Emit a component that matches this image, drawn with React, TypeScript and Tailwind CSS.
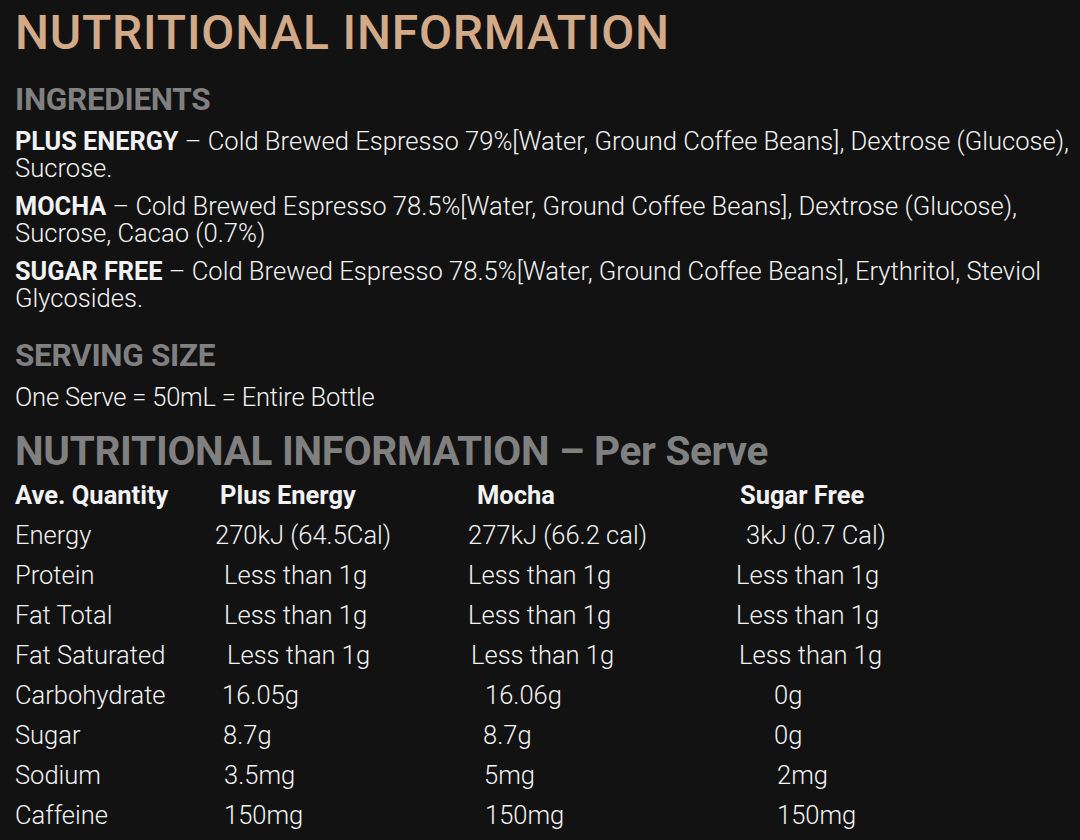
import React from "react";

const rows: [string, [string, number], [string, number], [string, number]][] = [
  ["Energy", ["270kJ (64.5Cal)", 3], ["277kJ (66.2 cal)", 3], ["3kJ (0.7 Cal)", 11]],
  ["Protein", ["Less than 1g", 12], ["Less than 1g", 3], ["Less than 1g", 1]],
  ["Fat Total", ["Less than 1g", 12], ["Less than 1g", 3], ["Less than 1g", 1]],
  ["Fat Saturated", ["Less than 1g", 15], ["Less than 1g", 6], ["Less than 1g", 4]],
  ["Carbohydrate", ["16.05g", 10], ["16.06g", 20], ["0g", 39]],
  ["Sugar", ["8.7g", 11], ["8.7g", 18], ["0g", 39]],
  ["Sodium", ["3.5mg", 12], ["5mg", 19], ["2mg", 42]],
  ["Caffeine", ["150mg", 12], ["150mg", 20], ["150mg", 42]],
];

export default function App() {
  return (
    <div
      className="w-[1080px] h-[840px] bg-[#121212] text-[#f2f2f2] pl-[15px] pr-0 overflow-hidden"
      style={{ fontFamily: "Roboto, 'Noto Sans', sans-serif" }}
    >
      <h1 className="pt-[12px] text-[48px] leading-[42px] font-medium tracking-[0.8px] text-[#d3aa88] whitespace-nowrap">
        NUTRITIONAL INFORMATION
      </h1>
      <h2 className="mt-[29px] text-[31.5px] leading-[34px] font-bold text-[#808080] tracking-[-0.3px]">
        INGREDIENTS
      </h2>
      <div className="mt-[11px] text-[25.6px] leading-[26px] font-light">
        <p className="mb-[12px]">
          <span className="font-bold text-[25.3px]">PLUS ENERGY</span> – Cold Brewed Espresso 79%[Water, Ground Coffee Beans], Dextrose (Glucose),
          Sucrose.
        </p>
        <p className="mb-[12px]">
          <span className="font-bold text-[25.3px]">MOCHA</span> – Cold Brewed Espresso 78.5%[Water, Ground Coffee Beans], Dextrose (Glucose),
          Sucrose, Cacao (0.7%)
        </p>
        <p>
          <span className="font-bold text-[25.3px]">SUGAR FREE</span> – Cold Brewed Espresso 78.5%[Water, Ground Coffee Beans], Erythritol, Steviol
          Glycosides.
        </p>
      </div>
      <h2 className="mt-[28px] text-[31.5px] leading-[34px] font-bold text-[#808080] tracking-[-0.3px]">
        SERVING SIZE
      </h2>
      <p className="mt-[11px] text-[25.5px] leading-[26px] font-light tracking-[-0.2px]">One Serve = 50mL = Entire Bottle</p>
      <h2 className="mt-[19px] text-[40.5px] leading-[44px] font-bold text-[#808080] tracking-[-0.3px] whitespace-nowrap">
        NUTRITIONAL INFORMATION – Per Serve
      </h2>
      <div className="mt-[2px] grid grid-cols-[197px_253px_270px_1fr] text-[25.5px] font-light">
        <div className="h-[40px] flex items-center font-bold">Ave. Quantity</div>
        <div className="h-[40px] flex items-center font-bold pl-[8px]">Plus Energy</div>
        <div className="h-[40px] flex items-center font-bold pl-[12px]">Mocha</div>
        <div className="h-[40px] flex items-center font-bold pl-[5px]">Sugar Free</div>
        {rows.map(([label, a, b, c]) => (
          <React.Fragment key={label}>
            <div className="h-[40px] flex items-center whitespace-nowrap">{label}</div>
            <div className="h-[40px] flex items-center whitespace-nowrap" style={{ paddingLeft: a[1] }}>{a[0]}</div>
            <div className="h-[40px] flex items-center whitespace-nowrap" style={{ paddingLeft: b[1] }}>{b[0]}</div>
            <div className="h-[40px] flex items-center whitespace-nowrap" style={{ paddingLeft: c[1] }}>{c[0]}</div>
          </React.Fragment>
        ))}
      </div>
    </div>
  );
}
